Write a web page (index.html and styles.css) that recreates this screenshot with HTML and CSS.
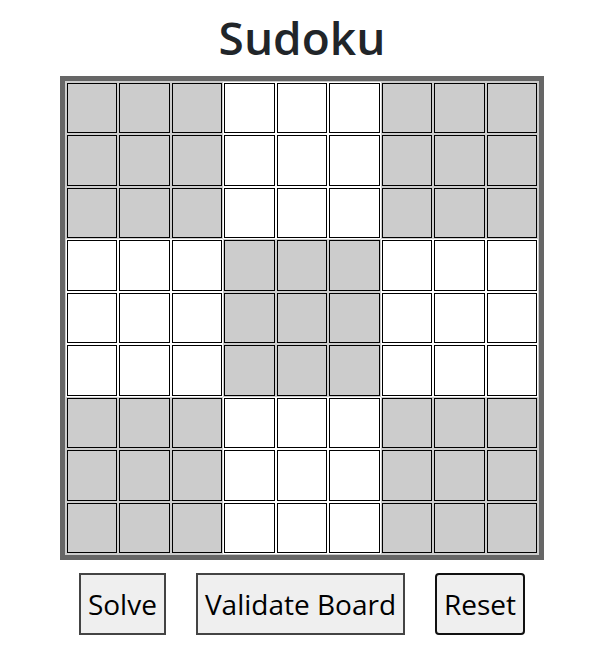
FILE: index.html
```html
<!DOCTYPE html>
<html lang="en">
<head>
  <meta charset="UTF-8" />
  <meta name="viewport" content="width=device-width, initial-scale=1.0"/>
  <title>Sudoku</title>
  <link rel="stylesheet" href="styles.css">
</head>
<body>
  <div class="app">
    <h1>Sudoku</h1>

    <div class="board" id="board"></div>

    <div class="controls">
      <button class="btn">Solve</button>
      <button class="btn">Validate Board</button>
      <button class="btn btn-focus">Reset</button>
    </div>
  </div>

  <script>
    const board = document.getElementById("board");
    for (let r = 0; r < 9; r++) {
      for (let c = 0; c < 9; c++) {
        const cell = document.createElement("div");
        const box = Math.floor(r / 3) * 3 + Math.floor(c / 3);
        cell.className = "cell" + (box % 2 === 0 ? " shaded" : "");
        const input = document.createElement("input");
        input.type = "text";
        input.maxLength = 1;
        cell.appendChild(input);
        board.appendChild(cell);
      }
    }
  </script>
</body>
</html>
```

FILE: styles.css
```css
* {
  box-sizing: border-box;
}

body {
  margin: 0;
  background: white;
  font-family: 'Open Sans', sans-serif;
  color: #212529;
}

.app {
  display: flex;
  flex-direction: column;
  align-items: center;
  padding-left: 13px;
}

h1 {
  font-size: 46px;
  font-weight: 600;
  margin: 6px 0 8px;
  line-height: 62px;
}

.board {
  display: grid;
  grid-template-columns: repeat(9, 1fr);
  width: 484px;
  height: 484px;
  border: 5px solid #666;
  padding: 1px;
  background: #ccc;
}

.cell {
  padding: 1px;
  background: white;
  display: flex;
}

.cell.shaded {
  background: #ccc;
}

.cell input {
  width: 100%;
  height: 100%;
  border: 1px solid #000;
  background: transparent;
  text-align: center;
  font-size: 24px;
  padding: 0;
  outline: none;
}

.controls {
  display: flex;
  gap: 30px;
  margin-top: 13px;
}

.btn {
  font-family: 'Open Sans', sans-serif;
  font-size: 28px;
  height: 62px;
  padding: 0 7px;
  background: #efefef;
  border: 2px solid #444;
  color: #000;
  cursor: pointer;
}

.btn-focus {
  border-color: #111;
  border-radius: 4px;
}
```
